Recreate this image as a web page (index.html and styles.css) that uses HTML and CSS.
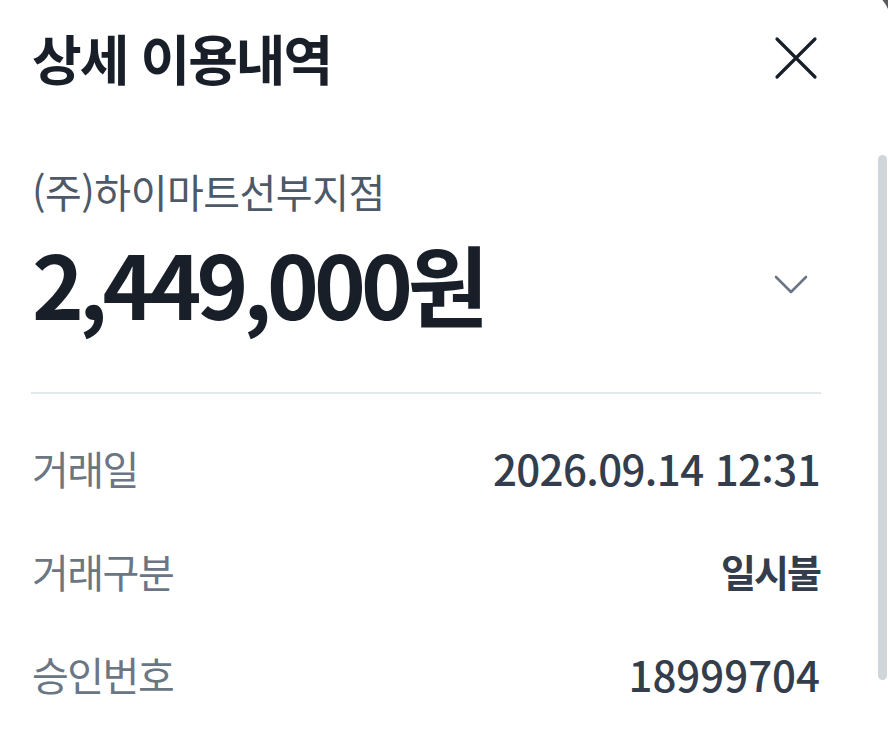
FILE: index.html
```html
<!DOCTYPE html>
<html lang="ko">
<head>
<meta charset="utf-8">
<title>상세 이용내역</title>
<link rel="stylesheet" href="styles.css">
</head>
<body>
<div class="sheet">
  <header class="header">
    <h1 class="title">상세 이용내역</h1>
    <button class="close" aria-label="닫기">
      <svg width="44" height="44" viewBox="0 0 44 44"><path d="M3 3 L41 41 M41 3 L3 41" stroke="#191f28" stroke-width="3.2" stroke-linecap="round" fill="none"/></svg>
    </button>
  </header>
  <section class="summary">
    <div class="merchant">(주)하이마트선부지점</div>
    <div class="amount-row">
      <div class="amount">2,449,000원</div>
      <svg class="chevron" width="34" height="20" viewBox="0 0 34 20"><path d="M2 2 L17 17 L32 2" stroke="#6b7684" stroke-width="2.6" stroke-linecap="round" stroke-linejoin="round" fill="none"/></svg>
    </div>
  </section>
  <hr class="divider">
  <dl class="details">
    <div class="row"><dt>거래일</dt><dd class="date">2026.09.14 12:31</dd></div>
    <div class="row"><dt>거래구분</dt><dd class="strong">일시불</dd></div>
    <div class="row"><dt>승인번호</dt><dd>18999704</dd></div>
  </dl>
  <div class="scrollbar"></div>
</div>
</body>
</html>
```
FILE: styles.css
```css
html, body {
  margin: 0;
  padding: 0;
}
body {
  background: #5a5a5e;
  overflow: hidden;
  font-family: "Noto Sans CJK KR", "Noto Sans", sans-serif;
  width: 888px;
  height: 750px;
}
.sheet {
  position: relative;
  background: #ffffff;
  margin: -10px -2px 0 0;
  border-top-right-radius: 30px;
  height: 770px;
  padding: 10px 70px 0 32px;
  box-sizing: border-box;
}
.header {
  display: flex;
  align-items: center;
  justify-content: space-between;
  height: 116px;
}
.title {
  margin: 0;
  font-size: 54px;
  font-weight: 700;
  color: #191f28;
  letter-spacing: -2px;
  line-height: 1;
}
.close {
  border: 0;
  background: none;
  padding: 0;
  margin-right: 2px;
  width: 44px;
  height: 44px;
  display: flex;
}
.summary {
  padding-top: 50px;
}
.merchant {
  font-size: 40px;
  line-height: 50px;
  color: #4e5968;
  letter-spacing: -0.5px;
}
.amount-row {
  display: flex;
  align-items: center;
  justify-content: space-between;
  height: 100px;
  margin-top: 16px;
}
.amount {
  font-size: 88px;
  font-weight: 700;
  color: #191f28;
  letter-spacing: -5px;
  line-height: 1;
}
.chevron {
  margin-right: 12px;
  margin-top: 6px;
}
.divider {
  border: 0;
  height: 2px;
  background: #e5e8eb;
  margin: 60px -1px 0 -1px;
}
.details {
  margin: 22px 0 0;
}
.row {
  display: flex;
  justify-content: space-between;
  align-items: center;
  height: 103px;
}
.row dt {
  color: #6b7684;
  font-size: 40px;
  letter-spacing: -1.5px;
}
.row dd {
  margin: 0;
  color: #333d4b;
  font-weight: 500;
  font-size: 42px;
  letter-spacing: 0;
}
.row dd.date {
  letter-spacing: -0.6px;
}
.row dd.strong {
  font-weight: 700;
  font-size: 38px;
  letter-spacing: -2px;
}
.scrollbar {
  position: absolute;
  left: 878px;
  top: 165px;
  width: 9px;
  height: 525px;
  border-radius: 5px;
  background: #d1d6db;
}
```
